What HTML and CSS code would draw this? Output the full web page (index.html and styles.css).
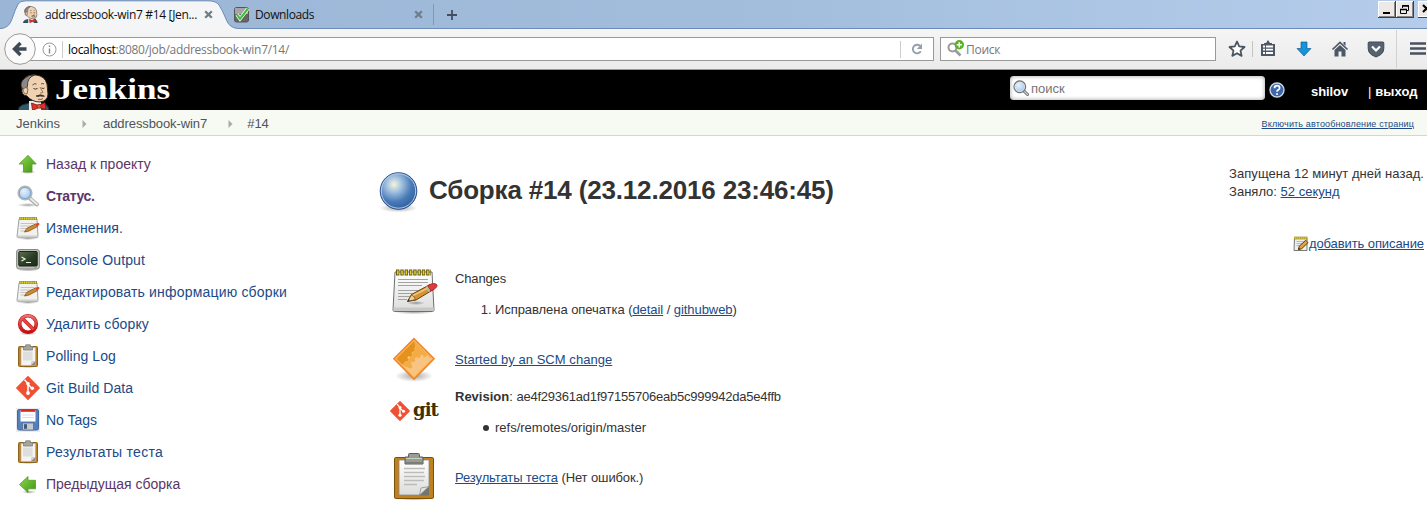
FILE: index.html
```
<!DOCTYPE html>
<html lang="ru">
<head>
<meta charset="utf-8">
<title>addressbook-win7 #14 [Jenkins]</title>
<link rel="stylesheet" href="styles.css">
</head>
<body>
<svg class="defs" aria-hidden="true">
  <defs>
    <linearGradient id="g-green" x1="0" y1="0" x2="1" y2="1"><stop offset="0" stop-color="#8fd850"/><stop offset="1" stop-color="#3f9413"/></linearGradient>
    <linearGradient id="g-paper" x1="0" y1="0" x2="0" y2="1"><stop offset="0" stop-color="#fff"/><stop offset="1" stop-color="#dcdcdc"/></linearGradient>
    <linearGradient id="g-red" x1="0" y1="0" x2="0" y2="1"><stop offset="0" stop-color="#f07070"/><stop offset="1" stop-color="#c60c0c"/></linearGradient>
    <linearGradient id="g-orange" x1="0" y1="0" x2="1" y2="0"><stop offset="0" stop-color="#e08a10"/><stop offset="1" stop-color="#fbcf8c"/></linearGradient>
    <linearGradient id="g-term" x1="0" y1="0" x2="1" y2="1"><stop offset="0" stop-color="#5d7350"/><stop offset=".55" stop-color="#2b3d25"/><stop offset="1" stop-color="#1c2a19"/></linearGradient>
    <radialGradient id="g-ball" cx=".38" cy=".32" r=".72"><stop offset="0" stop-color="#f4f6dc"/><stop offset=".3" stop-color="#a0bfdf"/><stop offset=".65" stop-color="#4a7cb8"/><stop offset="1" stop-color="#2c5c9f"/></radialGradient>
    <radialGradient id="g-lens" cx=".4" cy=".35" r=".7"><stop offset="0" stop-color="#e6f1fc"/><stop offset="1" stop-color="#9fc3ea"/></radialGradient>
    <radialGradient id="g-shadow"><stop offset="0" stop-color="#000" stop-opacity=".35"/><stop offset="1" stop-color="#000" stop-opacity="0"/></radialGradient>
  </defs>
  <symbol id="i-up" viewBox="0 0 24 24">
    <ellipse cx="12" cy="20" rx="8" ry="2" fill="url(#g-shadow)"/>
    <path d="M12 3.300 20.300 12H16v8H7.500v-8H3.200z" fill="url(#g-green)" stroke="#4da01f" stroke-width=".8"/>
  </symbol>
  <symbol id="i-prev" viewBox="0 0 24 24">
    <ellipse cx="13" cy="20" rx="7" ry="1.800" fill="url(#g-shadow)"/>
    <path d="M3.500 12.500 12 4.500v3.800h7.500v8.500H12v3.800z" fill="url(#g-green)" stroke="#4da01f" stroke-width=".8"/>
  </symbol>
  <symbol id="i-search" viewBox="0 0 24 24">
    <ellipse cx="12" cy="21" rx="11" ry="2" fill="url(#g-shadow)"/>
    <path d="M14 14.500 21 20.500" stroke="#a5a8a5" stroke-width="3.800" stroke-linecap="round"/>
    <path d="M15 15 21 20.300" stroke="#ecedeb" stroke-width="2" stroke-linecap="round"/>
    <circle cx="9" cy="9" r="6.600" fill="url(#g-lens)" stroke="#b4b7b4" stroke-width="2"/>
    <circle cx="9" cy="9" r="5.600" fill="none" stroke="#6c9bd2" stroke-width=".8"/>
  </symbol>
  <symbol id="i-lens" viewBox="0 0 16 16">
    <path d="m11 11 3.500 3.500" stroke="#666" stroke-width="3" stroke-linecap="round"/>
    <path d="m11.500 11.500 3 3" stroke="#d0d0d0" stroke-width="1.300" stroke-linecap="round"/>
    <circle cx="6.800" cy="6.800" r="5.800" fill="url(#g-lens)" stroke="#6f7270" stroke-width="1.300"/>
    <circle cx="6.800" cy="6.800" r="4.800" fill="none" stroke="#dfe6ee" stroke-width=".8"/>
  </symbol>
  <symbol id="i-note" viewBox="0 0 48 48">
    <ellipse cx="24" cy="45" rx="20" ry="2.500" fill="url(#g-shadow)"/>
    <path d="M5 5h37l2 38q0 1.500-1.500 1.500h-38Q3 44.500 3 43z" fill="url(#g-paper)" stroke="#6e706c"/>
    <path d="M3.500 40.500h40.300v3.500H3.500z" fill="#c8c8c5"/>
    <path d="M8 12.500h30M8 15.500h30M8 18.500h24M8 23.500h26M8 26.500h22M8 29.500h13M8 32.500h9" stroke="#a2a29e" stroke-width="1.100"/>
    <path d="M6 5.500h35" stroke="#6b5f10" stroke-width="6" stroke-dasharray="3.400 .9"/>
    <path d="M7 5.500h34" stroke="#e4d02c" stroke-width="4" stroke-dasharray="1.500 2.800"/>
    <ellipse cx="26" cy="36" rx="9" ry="2" fill="url(#g-shadow)"/>
    <path d="m17.500 34.500 4-7L40 17.500l3.500 5L26 33z" fill="#d49436" stroke="#70430c"/>
    <path d="m22 29 19-9.500" stroke="#f1c577" stroke-width="1.500"/>
    <path d="m17.500 34.500 4-6.500q3 1 4 4.500z" fill="#e9d0a0" stroke="#70430c" stroke-width=".7"/>
    <path d="m17.500 34.500 2.300-1L18.700 32z" fill="#222"/>
    <path d="M37.500 19 41 17q5-1.500 6 1 .5 3-6 6z" fill="#e33b3b" stroke="#9c2020" stroke-width=".8"/>
    <path d="m36.500 19.500 3 5" stroke="#b9b9ad" stroke-width="2"/>
  </symbol>
  <symbol id="i-note-s" viewBox="0 0 24 24">
    <ellipse cx="12" cy="22.500" rx="11" ry="1.500" fill="url(#g-shadow)"/>
    <path d="M3 3h18l1 17.500q0 1-1 1H2q-1 0-1-1z" fill="#f1f1ef" stroke="#a09f9a"/>
    <path d="M1.500 19.500h20v2h-20z" fill="#cfcfcc"/>
    <path d="M4.500 7.500h14M4.500 10h12M4.500 12.500h10M4.500 15h5" stroke="#c4c4c1"/>
    <path d="M3 2.500h18" stroke="#a09322" stroke-width="3"/>
    <path d="M3.500 2.500h17.500" stroke="#e6d63c" stroke-width="2" stroke-dasharray="1.200 1"/>
    <path d="m8.500 16 2.500-3.800 8.700-4.300 1.800 2.600L13 15z" fill="#d08b31" stroke="#80500f" stroke-width=".8"/>
    <path d="m19.300 8 2.500-1.200q2 .2 1.600 2l-2.200 1.700z" fill="#e4432f"/>
  </symbol>
  <symbol id="i-note-xs" viewBox="0 0 16 16">
    <path d="M1.500 2h12.500v12.500H1z" fill="#eeeeec" stroke="#777973"/>
    <path d="M3.500 5.500h8M3.500 7.500h7M3.500 9.500h5" stroke="#b8bab5"/>
    <path d="M1 2h13.500" stroke="#857712" stroke-width="2.600"/><path d="M1.500 2h13" stroke="#efdc3d" stroke-width="1.800" stroke-dasharray="1.200 .8"/>
    <path d="m5.500 13.500.7-3.200 6.500-6 2.300 2.400-6.300 6z" fill="#dfa34a" stroke="#5f3b0a" stroke-width="1"/>
    <path d="m5.200 13.800 2-.6-1.300-1.400z" fill="#222"/>
  </symbol>
  <symbol id="i-console" viewBox="0 0 24 24">
    <ellipse cx="12" cy="22" rx="11" ry="1.500" fill="url(#g-shadow)"/>
    <rect x=".6" y="1.500" width="22.800" height="19.500" rx="2.500" fill="#c0c2bd" stroke="#888a85"/>
    <rect x="2.800" y="3.500" width="18.400" height="14.500" rx="1" fill="url(#g-term)" stroke="#1b241a"/>
    <path d="m5.500 9 3.500 2-3.500 2M10 14.500h5" fill="none" stroke="#e9f3e4" stroke-width="1.200"/>
    <path d="M18.500 19.700h2" stroke="#6cbf3a" stroke-width="1"/>
  </symbol>
  <symbol id="i-stop" viewBox="0 0 24 24">
    <ellipse cx="12" cy="21.500" rx="9" ry="1.800" fill="url(#g-shadow)"/>
    <circle cx="12" cy="12" r="8.300" fill="#fff" stroke="#bd1c1c" stroke-width="3.600"/>
    <path d="m6.500 6.500 11 11" stroke="#bd1c1c" stroke-width="3.600"/>
    <circle cx="12" cy="12" r="8.300" fill="none" stroke="url(#g-red)" stroke-width="2.400"/>
    <path d="m6.500 6.500 11 11" stroke="#e24848" stroke-width="2.400"/>
  </symbol>
  <symbol id="i-clip-s" viewBox="0 0 24 24">
    <ellipse cx="12" cy="22.800" rx="9" ry="1.200" fill="url(#g-shadow)"/>
    <rect x="2.500" y="2.500" width="19" height="20" rx="1" fill="#bd8026" stroke="#94631b"/>
    <path d="M5 3.500h14.500v18H5z" fill="#f4f4f3" stroke="#acaca8" stroke-width=".6"/>
    <path d="M7 7.500h9.500v9H7z" fill="#dededc"/>
    <path d="M15 21.500v-3.500l4.500-1v4.500z" fill="#8f918d"/><path d="m14.500 21.500.8-3.700 4.200-.8z" fill="#d5d6d3"/>
    <path d="M7.500 2.500h2.200V.8h4.600v1.700h2.200V6h-9z" fill="#a3a69f" stroke="#7d807a" stroke-width=".8"/>
  </symbol>
  <symbol id="i-clip" viewBox="0 0 48 48">
    <ellipse cx="24" cy="47" rx="16" ry="1.500" fill="url(#g-shadow)"/>
    <rect x="4.500" y="5.500" width="39" height="41" rx="1.200" fill="#bf801f" stroke="#7d5009"/>
    <path d="M9 8h30v35H9z" fill="url(#g-paper)" stroke="#8b8b86" stroke-width=".8"/>
    <path d="M14 16.500h21M14 20.500h20M14 24.500h21M14 28.500h20M14 32.500h13" stroke="#bcbcb9" stroke-width="1.600"/>
    <path d="M29.500 43.500 31 36l8-1.500v9z" fill="#73756f"/><path d="M29.500 43 31 36l8-1.500z" fill="#e1e2df" stroke="#8f918d" stroke-width=".7"/>
    <path d="M15 5h3.500V2.500q0-1 1-1h9q1 0 1 1V5H33v7H15z" fill="#989c92" stroke="#5c5f58"/>
    <path d="M16 6.500h16" stroke="#cacdc4"/><path d="M16 10.500h16" stroke="#7a7e74"/>
  </symbol>
  <symbol id="i-git" viewBox="0 0 24 24">
    <path d="M12 .9 23.100 12 12 23.100.9 12z" fill="#f05133" stroke="#f05133" stroke-width="1.600" stroke-linejoin="round"/>
    <path d="M8.500 3.800 12 7.500V18M12 8.500l4 4" fill="none" stroke="#fff" stroke-width="1.500"/>
    <circle cx="12" cy="7.800" r="1.800" fill="#fff"/><circle cx="12" cy="17" r="1.900" fill="#fff"/><circle cx="16.300" cy="12.300" r="1.800" fill="#fff"/>
  </symbol>
  <symbol id="i-floppy" viewBox="0 0 24 24">
    <path d="M0 0h24v24H0z" fill="#ececee"/>
    <rect x="1.500" y="1.500" width="21" height="20.500" rx="1.500" fill="#5481bd" stroke="#4069a3"/>
    <path d="M4.500 2h15v11.500h-15z" fill="#fff"/><path d="M4.500 1.500h15v2.300h-15z" fill="#d9281d"/>
    <path d="M6 7h12M6 9.500h12" stroke="#dadde2"/>
    <path d="M6.500 15h11v7h-11z" fill="#c6c9cd" stroke="#53657f" stroke-width=".7"/><path d="M8 16.200h3v4.600H8z" fill="#3f597f"/>
  </symbol>
  <symbol id="i-scm" viewBox="0 0 48 48">
    <ellipse cx="24" cy="40" rx="19" ry="6" fill="url(#g-shadow)"/>
    <path d="M24 2.700 44 22.700 24 43 4 22.700z" fill="#f9c481" stroke="#ef8423" stroke-width="1.600"/>
    <path d="m24 4.800-18 18 5.500 5.600 2.500-.4 1-2.500 2.500.2 1.200-2.200-1.500-2 1.700-1.600 2 1 1.500-2-1-2 1.800-1.300 1.700 1 1-2.500-1.500-1.400 1-2.200 2 .2.500-2.500-1.800-1z" fill="#e5921d"/>
    <path d="m24 4.800 18 17.400-3-.7-.5-2.200-2 .2-.8 1.600-2-.2-.8-2-2.300.2-.2 2-2 1-1.800-1.200-2 1.500.8 2-1.500 1.700-2.200-.3-1 2.500 1.600 1.500-.3 2-2.200.7L12 29l3-3 3-1.500 3-4 2-4.500 2.500-4-.5-3z" fill="#f3ac46"/>
    <path d="M24 4.800 42 22.700 24 41 6 22.700z" fill="none" stroke="#fbb359" stroke-width=".8"/>
  </symbol>
  <symbol id="i-butler" viewBox="0 0 32 37">
    <path d="M0 37q0-4 4-6l7-2h14q6 2 6 8z" fill="#34576b" stroke="#182832"/>
    <path d="M11 27v10h12V26z" fill="#f2f1ee"/>
    <path d="M4 15Q2 9 6 5q5-5 12-4 9 1 11 9l1 10q0 7-8 8-8 0-13-6-6-1-5-7z" fill="#efd2b2" stroke="#302520" stroke-width="1"/>
    <path d="M4 14Q1 9 7 4q4-3.500 9-2.800Q9 4 9.500 12L8 17z" fill="#8b8887" stroke="#2f2c2b" stroke-width=".8"/>
    <path d="M5 15q3-3 5 0l-1 5q-4 0-4-5z" fill="#efd0ae" stroke="#6e4c36" stroke-width=".8"/>
    <path d="M14.500 11q2-2 4-1M23 10q2-1 3 0" fill="none" stroke="#4b392f" stroke-width=".9"/>
    <path d="M15.500 14.500q2 1.200 4 0M23.500 14q2 1 3 0" fill="none" stroke="#2d2520" stroke-width=".9"/>
    <path d="m22 13 3 5.500-3 .7" fill="none" stroke="#9a6c4d" stroke-width=".9"/>
    <path d="M18 22q5-2.500 8.500.2-3 .4-4.500-.3-2 1.200-4 .1z" fill="#3e332c" stroke="#3e332c" stroke-width=".7"/>
    <path d="M20 25.200q3 1 5-.6" fill="none" stroke="#7a4a35" stroke-width=".9"/>
    <path d="m13.500 29 7 2.500 6.500-3 1 7-7-2-6.500 3z" fill="#e0332a" stroke="#7c120c" stroke-width=".8"/>
    <circle cx="21" cy="32.300" r="2" fill="#ec5247" stroke="#7c120c" stroke-width=".6"/>
  </symbol>
</svg>

<div class="browser">
  <div class="tabbar">
    <div class="tab tab-active">
      <svg class="tab-shape" viewBox="0 0 242 30"><path d="M0 28.500h1Q9 28 12 19T18 4Q20 .8 26 .8H208Q216 .8 219 5T226 19Q229 28 238 28.500h4V30H0z" fill="#f4f5f6"/><path d="M0 28.500h1Q9 28 12 19T18 4Q20 .8 26 .8H208Q216 .8 219 5T226 19Q229 28 238 28.500h4" fill="none" stroke="#6c8bb6"/></svg>
      <svg class="fav" viewBox="0 0 32 37"><use href="#i-butler"/></svg>
      <span class="ui tab-title t-wide">addressbook-win7 #14 [Jen...</span>
      <svg class="close" viewBox="0 0 9 9"><path d="m1.200 1.200 6.600 6.600m0-6.600L1.200 7.800"/></svg>
    </div>
    <div class="tab tab-second">
      <svg class="fav-check" viewBox="0 0 16 16"><rect x=".5" y=".5" width="14" height="14.500" rx="2" fill="#666" stroke="#555"/><path d="M1 1h13v6H1z" fill="#a5a5a5"/><path d="m3 7.500 3 4.300L14 1.500" fill="none" stroke="#fff" stroke-width="3.600"/><path d="m3 7.500 3 4.300L14 1.500" fill="none" stroke="#35c234" stroke-width="2.100"/></svg>
      <span class="ui t-dl">Downloads</span>
      <svg class="close" viewBox="0 0 9 9"><path d="m1.200 1.200 6.600 6.600m0-6.600L1.200 7.800"/></svg>
    </div>
    <svg class="plus" viewBox="0 0 10 10"><path d="M5 0v10M0 5h10" stroke="#454f5a" stroke-width="1.800"/></svg>
    <div class="winbtns">
      <svg viewBox="0 0 18 17"><path d="M0 0h18v17H0z" fill="#404040"/><path d="M0 0h17v16H0z" fill="#fff"/><path d="M1 1h16v15H1z" fill="#888"/><path d="M1 1h15v14H1z" fill="#ece9e6"/><path d="M5 11h7v2H5z"/></svg>
      <svg viewBox="0 0 18 17"><path d="M0 0h18v17H0z" fill="#404040"/><path d="M0 0h17v16H0z" fill="#fff"/><path d="M1 1h16v15H1z" fill="#888"/><path d="M1 1h15v14H1z" fill="#ece9e6"/><path d="M6.500 7V4.500h6v5H11M4.500 8.500h6v4h-6z" fill="none" stroke="#000"/><path d="M6 5h7M4 8.500h7" stroke="#000" stroke-width="1.600"/></svg>
      <svg class="win-x" viewBox="0 0 18 17"><path d="M0 0h18v17H0z" fill="#fff"/><path d="M1 1h17v14H1z" fill="#ece9e6"/><path d="M0 16h18v1H0z" fill="#404040"/><path d="m5 4 7 7m0-7-7 7" stroke="#000" stroke-width="2"/></svg>
    </div>
  </div>

  <div class="toolbar">
    <svg class="back" viewBox="0 0 32 32"><circle cx="16" cy="16" r="15.300" fill="#fafafa" stroke="#999"/><path d="M22.500 16H11M16.500 10 10.500 16l6 6" fill="none" stroke="#3f4a57" stroke-width="3.400"/></svg>
    <div class="url">
      <svg class="info" viewBox="0 0 15 15"><circle cx="7.500" cy="7.500" r="6.500" fill="none" stroke="#999"/><path d="M7.500 6.500v5M7.500 3.500v1.600" stroke="#888" stroke-width="1.400"/></svg>
      <i class="vsep"></i>
      <span class="ui t-url"><span class="host">localhost</span>:8080/job/addressbook-win7/14/</span>
      <i class="vsep sep-reload"></i>
      <svg class="reload" viewBox="0 0 12 12"><path d="M9.800 8.300A4.300 4.300 0 1 1 9 2.800" fill="none" stroke="#95a0ac" stroke-width="1.900"/><path d="M11 .5V6H5.800z" fill="#95a0ac"/></svg>
    </div>
    <div class="searchbar">
      <svg class="mag" viewBox="0 0 18 18"><circle cx="5.500" cy="7.500" r="4" fill="none" stroke="#999" stroke-width="2"/><path d="m8.500 10.500 5 5" stroke="#999" stroke-width="2.600"/><circle cx="12.300" cy="4.800" r="4.700" fill="#55b51e"/><path d="M12.300 2.200v5.200M9.700 4.800h5.200" stroke="#fff" stroke-width="1.500"/></svg>
      <span class="ui t-find">Поиск</span>
    </div>
    <svg class="tools" viewBox="0 0 200 40">
      <path d="m11 12.500 2.200 4.900 5.300.6-4 3.600 1.100 5.300-4.600-2.700-4.700 2.700 1.200-5.300-4-3.600 5.300-.6z" fill="#fff" stroke="#4a5562" stroke-width="1.800" stroke-linejoin="round"/>
      <path d="M26.500 12v16" stroke="#c4c4c4"/>
      <path d="M35 15h14v12H35z" fill="#4d5866"/><path d="M38 16v-2h2l2-3 2 3h2v2z" fill="#4d5866"/><path d="M37 17.500h2m1 0h7M37 20.700h2m1 0h7M37 24h2m1 0h7" stroke="#fff" stroke-width="1.800"/>
      <path d="M75 13h6v6.500h4L78 27 71 19.500h4z" fill="#1793dc" stroke="#13608f" stroke-width=".7"/>
      <path d="m106.500 20.500 7.500-7 7.500 7" fill="none" stroke="#4d5866" stroke-width="1.700"/><path d="M108.500 21v6.500h4V22.500h3v5h4V21L114 16z" fill="#4d5866"/><path d="M117.500 13h2v4l-2-2z" fill="#4d5866"/>
      <path d="M143 13h14q.8 0 .8 1v5.500q0 4-3.300 6.300L150 28l-4.500-2.200q-3.300-2.300-3.300-6.300V14q0-1 .8-1z" fill="#566270" stroke="#3f4b58"/><path d="m146 17.500 4 4 4-4" fill="none" stroke="#fff" stroke-width="2.200"/>
      <path d="M170.500 1v38" stroke="#d2d2d2"/>
      <path d="M184 14.500h18M184 19.500h18M184 24.500h18" stroke="#48525f" stroke-width="2.600"/>
    </svg>
  </div>
</div>

<header class="header">
  <svg class="logo" viewBox="0 0 32 37"><use href="#i-butler"/></svg>
  <div class="brand"><span>Jenkins</span></div>
  <div class="jsearch">
    <svg viewBox="0 0 16 16"><use href="#i-lens"/></svg>
    <span>поиск</span>
  </div>
  <svg class="help" viewBox="0 0 16 16"><circle cx="8" cy="8" r="7" fill="#3c67a8" stroke="#c9d6e8" stroke-width="1.400"/><path d="M5.500 6.300q0-2.600 2.600-2.600 2.500 0 2.500 2.200 0 1.300-1.400 2Q8 8.400 8 9.700M8 11.200v1.700" fill="none" stroke="#fff" stroke-width="1.700"/></svg>
  <b class="user">shilov</b>
  <b class="logout"><span class="bar">|</span> выход</b>
</header>

<nav class="crumbs">
  <span>Jenkins</span><svg viewBox="0 0 5 8"><path d="m.5 0 4 4-4 4z"/></svg>
  <span class="c-job">addressbook-win7</span><svg viewBox="0 0 5 8"><path d="m.5 0 4 4-4 4z"/></svg>
  <span>#14</span>
  <a class="refresh" href="#">Включить автообновление страниц</a>
</nav>

<div class="page">
  <aside class="side">
    <a class="visited" href="#"><svg><use href="#i-up"/></svg><span>Назад к проекту</span></a>
    <a class="visited current" href="#"><svg><use href="#i-search"/></svg><span>Статус.</span></a>
    <a href="#"><svg><use href="#i-note-s"/></svg><span class="ls-05">Изменения.</span></a>
    <a href="#"><svg><use href="#i-console"/></svg><span class="ls-12">Console Output</span></a>
    <a href="#"><svg><use href="#i-note-s"/></svg><span class="ls-18">Редактировать информацию сборки</span></a>
    <a href="#"><svg><use href="#i-stop"/></svg><span class="ls-12">Удалить сборку</span></a>
    <a href="#"><svg><use href="#i-clip-s"/></svg><span class="ls-05">Polling Log</span></a>
    <a href="#"><svg><use href="#i-git"/></svg><span class="ls-05">Git Build Data</span></a>
    <a href="#"><svg><use href="#i-floppy"/></svg><span>No Tags</span></a>
    <a href="#"><svg><use href="#i-clip-s"/></svg><span class="ls-27">Результаты теста</span></a>
    <a class="visited" href="#"><svg><use href="#i-prev"/></svg><span>Предыдущая сборка</span></a>
  </aside>

  <main class="main">
    <div class="top">
      <svg class="ball" viewBox="0 0 40 44"><ellipse cx="20.500" cy="37" rx="19" ry="4.500" fill="url(#g-shadow)"/><circle cx="20.500" cy="20" r="18.300" fill="url(#g-ball)" stroke="#2b4f8e" stroke-width="1"/><circle cx="20.500" cy="20" r="17.200" fill="none" stroke="#b7cbe6" stroke-width="1"/></svg>
      <h1>Сборка #14 (23.12.2016 23:46:45)</h1>
      <div class="meta">
        <div class="when"><div class="ls-05">Запущена 12 минут дней назад.</div><div>Заняло: <a href="#">52 секунд</a></div></div>
        <div class="describe"><svg viewBox="0 0 16 16"><use href="#i-note-xs"/></svg><a href="#">добавить описание</a></div>
      </div>
    </div>
    <section class="row r-changes">
      <svg><use href="#i-note"/></svg>
      <div><span class="ls-neg">Changes</span><ol><li>Исправлена опечатка (<a href="#">detail</a> / <a href="#">githubweb</a>)</li></ol></div>
    </section>
    <section class="row r-scm">
      <svg><use href="#i-scm"/></svg>
      <div><a class="ls-05" href="#">Started by an SCM change</a></div>
    </section>
    <section class="row r-git">
      <div class="gitlogo"><svg viewBox="0 0 24 24"><use href="#i-git"/></svg><b>git</b></div>
      <div><b>Revision</b>: <span class="rev">ae4f29361ad1f97155706eab5c999942da5e4ffb</span><ul><li>refs/remotes/origin/master</li></ul></div>
    </section>
    <section class="row r-test">
      <svg><use href="#i-clip"/></svg>
      <div class="res"><a href="#">Результаты теста</a> (Нет ошибок.)</div>
    </section>
  </main>
</div>
</body>
</html>
```
FILE: styles.css
```
* { box-sizing: border-box; }
body { margin: 0; width: 1427px; height: 515px; overflow: hidden; background: #fff; color: #333; font: 13px/18px "Liberation Sans", Arial, sans-serif; }
svg { display: block; flex: none; }
.defs { position: absolute; width: 0; height: 0; }
a { color: #204a87; }
.ui { font: 12px/18px "Open Sans", "Noto Sans", sans-serif; white-space: nowrap; }

/* browser chrome */
.tabbar { display: flex; align-items: flex-start; height: 29px; background: linear-gradient(90deg, #9ab5d5, #a3bedd 55%, #b5cdeb); border-bottom: 1px solid #6c8bb6; }
.tab { display: flex; align-items: center; height: 29px; color: #111; }
.tab-active { position: relative; width: 231px; padding-left: 22px; }
.tab-shape { position: absolute; left: 0; top: 0; width: 242px; height: 30px; }
.fav { position: relative; width: 17px; height: 17px; margin-right: 6px; }
.tab-title { position: relative; width: 152px; }
.t-wide { letter-spacing: -0.334px; }
.close { position: relative; width: 9px; height: 9px; margin-left: 7px; stroke: #6f7c8c; stroke-width: 2.3; }
.tab-second { width: 203px; padding-left: 3px; border-right: 1px solid #8098b6; height: 21px; margin-top: 4px; }
.fav-check { width: 16px; height: 16px; margin-right: 5px; }
.t-dl { width: 152px; letter-spacing: -0.39px; }
.plus { width: 10px; height: 10px; margin: 10px 0 0 13px; }
.winbtns { display: flex; margin: 1px 0 0 auto; width: 49px; overflow: hidden; }
.winbtns svg { width: 18px; height: 17px; }
.winbtns .win-x { margin-left: 4px; }

.toolbar { display: flex; align-items: center; height: 41px; background: linear-gradient(#f5f5f5, #ebebeb); border-bottom: 1px solid #999; }
.back { position: relative; z-index: 1; width: 32px; height: 32px; margin: 0 -21px 0 4px; }
.url, .searchbar { display: flex; align-items: center; height: 24px; background: #fff; border: 1px solid #999; color: #777; }
.url { width: 919px; padding-left: 26px; }
.info { width: 15px; height: 15px; }
.vsep { width: 1px; height: 17px; margin: 0 5px; background: #ccc; }
.t-url { flex: 1; letter-spacing: -0.3px; padding-top: 1px; }
.host { color: #000; }
.sep-reload { margin: 0 10px 0 0; }
.reload { width: 12px; height: 12px; margin-right: 10px; }
.searchbar { width: 276px; margin-left: 6px; padding-left: 6px; }
.mag { width: 18px; height: 18px; margin-right: 1px; }
.t-find { letter-spacing: -0.25px; padding-top: 1px; }
.tools { width: 200px; height: 40px; margin-left: 10px; }

/* page header */
.header { display: flex; align-items: flex-start; height: 40px; background: #000; color: #fff; overflow: hidden; }
.logo { width: 32px; height: 37px; margin: 4px 5px 0 18px; }
.brand { width: 955px; margin-top: 2px; font: bold 29px/34px "Liberation Serif", serif; }
.brand span { display: inline-block; transform: scaleX(1.21); transform-origin: 0 0; }
.jsearch { display: flex; align-items: center; width: 255px; height: 24px; margin-top: 6px; padding-left: 3px; background: #fff; border-radius: 4px; box-shadow: inset 0 0 4px #999; color: #757575; }
.jsearch svg { width: 16px; height: 16px; margin-right: 2px; }
.jsearch span { padding-top: 2px; }
.help { width: 16px; height: 16px; margin: 12px 26px 0 4px; }
.user { width: 57px; margin-top: 13px; letter-spacing: -0.09px; }
.logout { margin-top: 13px; letter-spacing: .1px; white-space: nowrap; }
.bar { font-weight: normal; }

.crumbs { display: flex; align-items: center; height: 26px; padding: 2px 13px 0 16px; background: #f6faf2; border-bottom: 1px solid #d3d7cf; color: #4d545d; }
.crumbs svg { width: 5px; height: 8px; fill: #aaa; margin: 0 16px 0 22px; }
.crumbs .c-job { letter-spacing: -0.09px; }
.crumbs .c-job + svg { margin: 0 14px 0 21px; }
.refresh { margin-left: auto; font-size: 9px; letter-spacing: .15px; }

/* page body */
.page { display: flex; }
.side { width: 378px; padding: 12px 0 0 16px; }
.side a { display: flex; align-items: center; height: 32px; font-size: 14px; text-decoration: none; }
.side svg { width: 24px; height: 24px; margin-right: 6px; }
.side .visited { color: #5c3566; }
.side .current { font-weight: bold; letter-spacing: -0.36px; }
.ls-05 { letter-spacing: .05px; }
.ls-12 { letter-spacing: .125px; }
.ls-18 { letter-spacing: .18px; }
.ls-27 { letter-spacing: .268px; }
.ls-neg { letter-spacing: -0.15px; }

.main { flex: 1; }
.top { display: flex; align-items: flex-start; height: 131px; padding-right: 3px; }
.ball { width: 40px; height: 44px; margin: 35px 11px 0 0; }
h1 { margin: 37px 0 0; font-size: 26px; line-height: 34px; letter-spacing: -0.17px; white-space: nowrap; }
.meta { display: flex; flex-direction: column; align-items: flex-end; margin: 29px 0 0 auto; }
.describe { display: flex; align-items: center; margin-top: 34px; letter-spacing: -0.09px; }
.describe svg { width: 16px; height: 16px; }

.row { display: flex; padding-left: 12px; }
.row > svg, .gitlogo { width: 48px; height: 48px; margin-right: 17px; }
.r-changes { height: 69px; }
.r-changes > div { padding-top: 3px; }
.r-changes li { letter-spacing: -0.06px; }
.r-scm { height: 51px; }
.r-scm > div { padding-top: 15px; }
.r-git { height: 65px; }
.r-git > div + div { padding-top: 1px; }
.r-test > div { padding-top: 17px; letter-spacing: -0.11px; }
ol, ul { margin: 13px 0 0; padding-left: 40px; }
ul { list-style: none; padding-left: 28px; }
ul li { display: flex; align-items: center; gap: 6px; }
ul li::before { content: ""; width: 6px; height: 6px; border-radius: 50%; background: #333; }
.rev { letter-spacing: -0.235px; }
.gitlogo { display: flex; align-items: center; }
.gitlogo svg { width: 20px; height: 20px; margin-right: 3px; }
.gitlogo b { font: bold 18px/24px "DejaVu Serif", serif; letter-spacing: -0.9px; color: #413000; margin-top: -3px; }
```
